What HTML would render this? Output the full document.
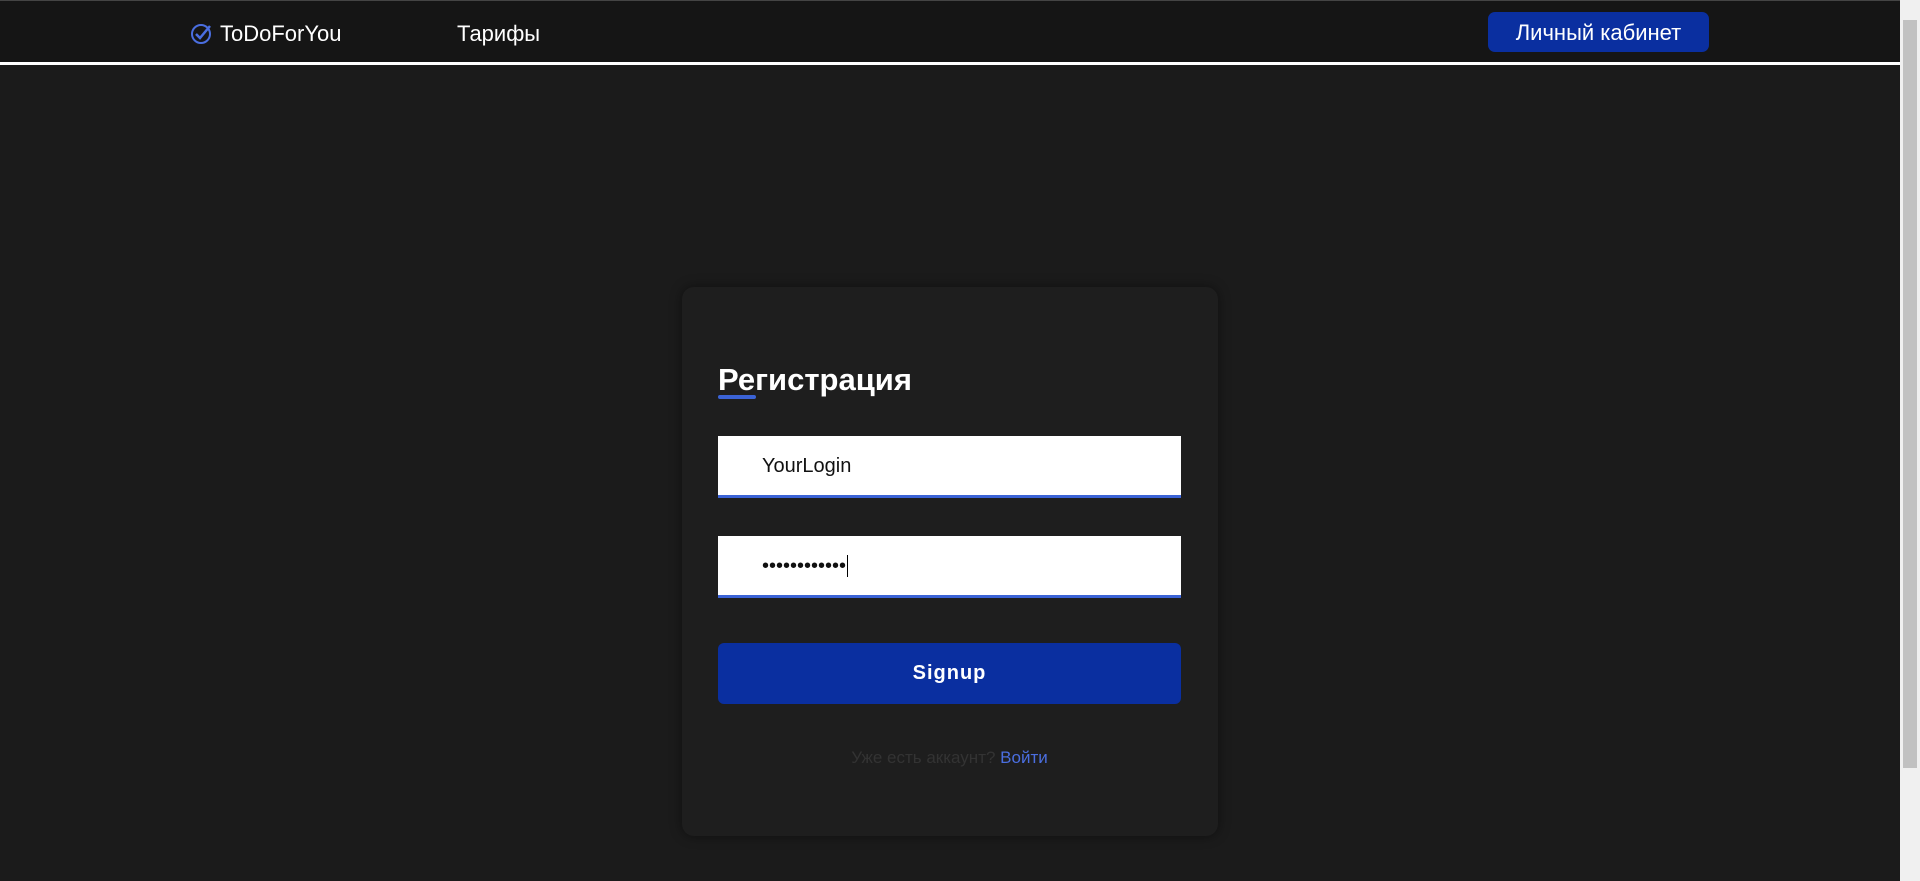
<!DOCTYPE html>
<html><head><meta charset="utf-8"><style>
*{margin:0;padding:0;box-sizing:border-box}
body{width:1920px;height:881px;background:#1b1b1b;overflow:hidden;font-family:"Liberation Sans","DejaVu Sans",sans-serif;position:relative}
.hdr{position:absolute;left:0;top:0;width:1900px;height:62px;background:#151515;border-top:1px solid #444}
.line{position:absolute;left:0;top:62px;width:1900px;height:3px;background:#fff}
.logo{position:absolute;left:190px;top:21px;color:#fff;font-size:22px;display:flex;align-items:center}
.logo svg{margin-right:6px}
.nav{position:absolute;left:457px;top:21px;color:#fff;font-size:22px}
.btn{position:absolute;left:1488px;top:12px;width:221px;height:40px;background:#0a2fa0;border-radius:7px;color:#fff;font-size:22px;text-align:center;line-height:41px}
.sb{position:absolute;right:0;top:0;width:20px;height:881px;background:#f0f0f0}
.sb div{position:absolute;left:3px;top:20px;width:14px;height:748px;background:#c1c1c1}
.card{position:absolute;left:682px;top:287px;width:536px;height:549px;background:#1e1e1e;border-radius:12px;box-shadow:0 0 12px rgba(0,0,0,.45)}
h1{position:absolute;left:718px;top:362px;color:#fff;font-size:31px;font-weight:bold}
.ul{position:absolute;left:718px;top:395px;width:38px;height:4px;background:#3b63d6;border-radius:2px}
.inp{position:absolute;left:718px;width:463px;height:62px;background:#fff;border-bottom:3px solid #3b63d6;font-size:20px;color:#111;padding-left:44px;line-height:60px}
.sign{position:absolute;left:718px;top:643px;width:463px;height:61px;background:#0a2fa0;border-radius:6px;color:#fff;font-size:20px;font-weight:bold;letter-spacing:1px;text-align:center;line-height:61px}
.foot{position:absolute;left:718px;top:748px;width:463px;text-align:center;font-size:17px;color:#333}
.foot span{color:#4a6ee0}
</style></head><body>
<div class="hdr"></div><div class="line"></div>
<div class="logo"><svg width="24" height="24" viewBox="0 0 24 24"><circle cx="11" cy="12" r="9" fill="none" stroke="#4a6ee0" stroke-width="2"/><path d="M6 12l4 4 10-12" fill="none" stroke="#4a6ee0" stroke-width="2.5"/></svg>ToDoForYou</div>
<div class="nav">Тарифы</div>
<div class="btn">Личный кабинет</div>
<div class="sb"><div></div></div>
<div class="card"></div>
<h1>Регистрация</h1><div class="ul"></div>
<div class="inp" style="top:436px">YourLogin</div>
<div class="inp" style="top:536px;letter-spacing:0px">••••••••••••<span style="border-left:1.5px solid #000;margin-left:1px">&nbsp;</span></div>
<div class="sign">Signup</div>
<div class="foot">Уже есть аккаунт? <span>Войти</span></div>
</body></html>
